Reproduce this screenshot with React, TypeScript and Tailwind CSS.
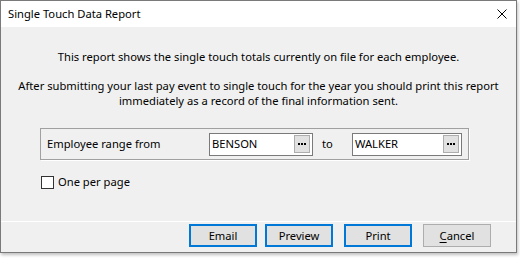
import React from 'react';

function DotsButton() {
  return (
    <div className="w-[16px] h-[18px] bg-[#e1e1e1] border border-[#adadad] flex items-center justify-center shrink-0">
      <span className="flex gap-[1px]">
        <span className="w-[2px] h-[2px] bg-black" />
        <span className="w-[2px] h-[2px] bg-black" />
        <span className="w-[2px] h-[2px] bg-black" />
      </span>
    </div>
  );
}

function LookupField({ value }: { value: string }) {
  return (
    <div className="h-[23px] bg-white border border-[#7a7a7a] flex items-center pl-[2px] pr-[2px]">
      <span className="flex-1 leading-none">{value}</span>
      <DotsButton />
    </div>
  );
}

function DialogButton({ label, primary = true, mnemonic }: { label: string; primary?: boolean; mnemonic?: boolean }) {
  return (
    <button
      className={`w-[68px] h-[23px] bg-[#e1e1e1] flex items-center justify-center leading-none ${
        primary ? 'border-2 border-[#0078d7]' : 'border border-[#adadad]'
      }`}
    >
      {mnemonic ? (
        <span>
          <span className="underline underline-offset-2">{label.charAt(0)}</span>
          {label.slice(1)}
        </span>
      ) : (
        label
      )}
    </button>
  );
}

export default function App() {
  return (
    <div className="w-[520px] h-[258px] bg-white font-['Noto_Sans',sans-serif] text-[11.2px] text-black">
      <div className="w-[517px] h-[253px] border border-[#7a7a7a] bg-[#f0f0f0] flex flex-col shadow-[1px_2px_3px_rgba(0,0,0,0.25)]">
        {/* title bar */}
        <div className="h-[26px] bg-white flex items-center justify-between pl-[7px] pr-[9px] shrink-0">
          <span>Single Touch Data Report</span>
          <svg width="10" height="10" viewBox="0 0 10 10">
            <path d="M0.5 0.5 L9.5 9.5 M9.5 0.5 L0.5 9.5" stroke="black" strokeWidth="1" />
          </svg>
        </div>

        {/* body */}
        <div className="flex-1 flex flex-col">
          <p className="text-center mt-[22px] leading-[15px]">
            This report shows the single touch totals currently on file for each employee.
          </p>
          <p className="text-center mt-[14px] leading-[15px] whitespace-nowrap">
            After submitting your last pay event to single touch for the year you should print this report
            <br />
            immediately as a record of the final information sent.
          </p>

          <div className="ml-[39px] mt-[20px] w-[429px] h-[32px] border border-[#a0a0a0] shadow-[1px_1px_0_#ffffff] flex items-center pl-[6px]">
            <span className="w-[162px]">Employee range from</span>
            <div className="w-[104px]">
              <LookupField value="BENSON" />
            </div>
            <span className="w-[39px] pl-[9px]">to</span>
            <div className="w-[110px]">
              <LookupField value="WALKER" />
            </div>
          </div>

          <div className="ml-[40px] mt-[14px] flex items-center gap-[4px]">
            <span className="w-[13px] h-[13px] bg-white border border-[#333333]" />
            <span>One per page</span>
          </div>

          <div className="mt-auto border-t border-[#ffffff] h-[31px] flex items-start justify-end pr-[25px] pt-[2px]">
            <DialogButton label="Email" />
            <div className="ml-[8px]">
              <DialogButton label="Preview" />
            </div>
            <div className="ml-[11px]">
              <DialogButton label="Print" />
            </div>
            <div className="ml-[11px]">
              <DialogButton label="Cancel" primary={false} mnemonic />
            </div>
          </div>
        </div>
      </div>
    </div>
  );
}
